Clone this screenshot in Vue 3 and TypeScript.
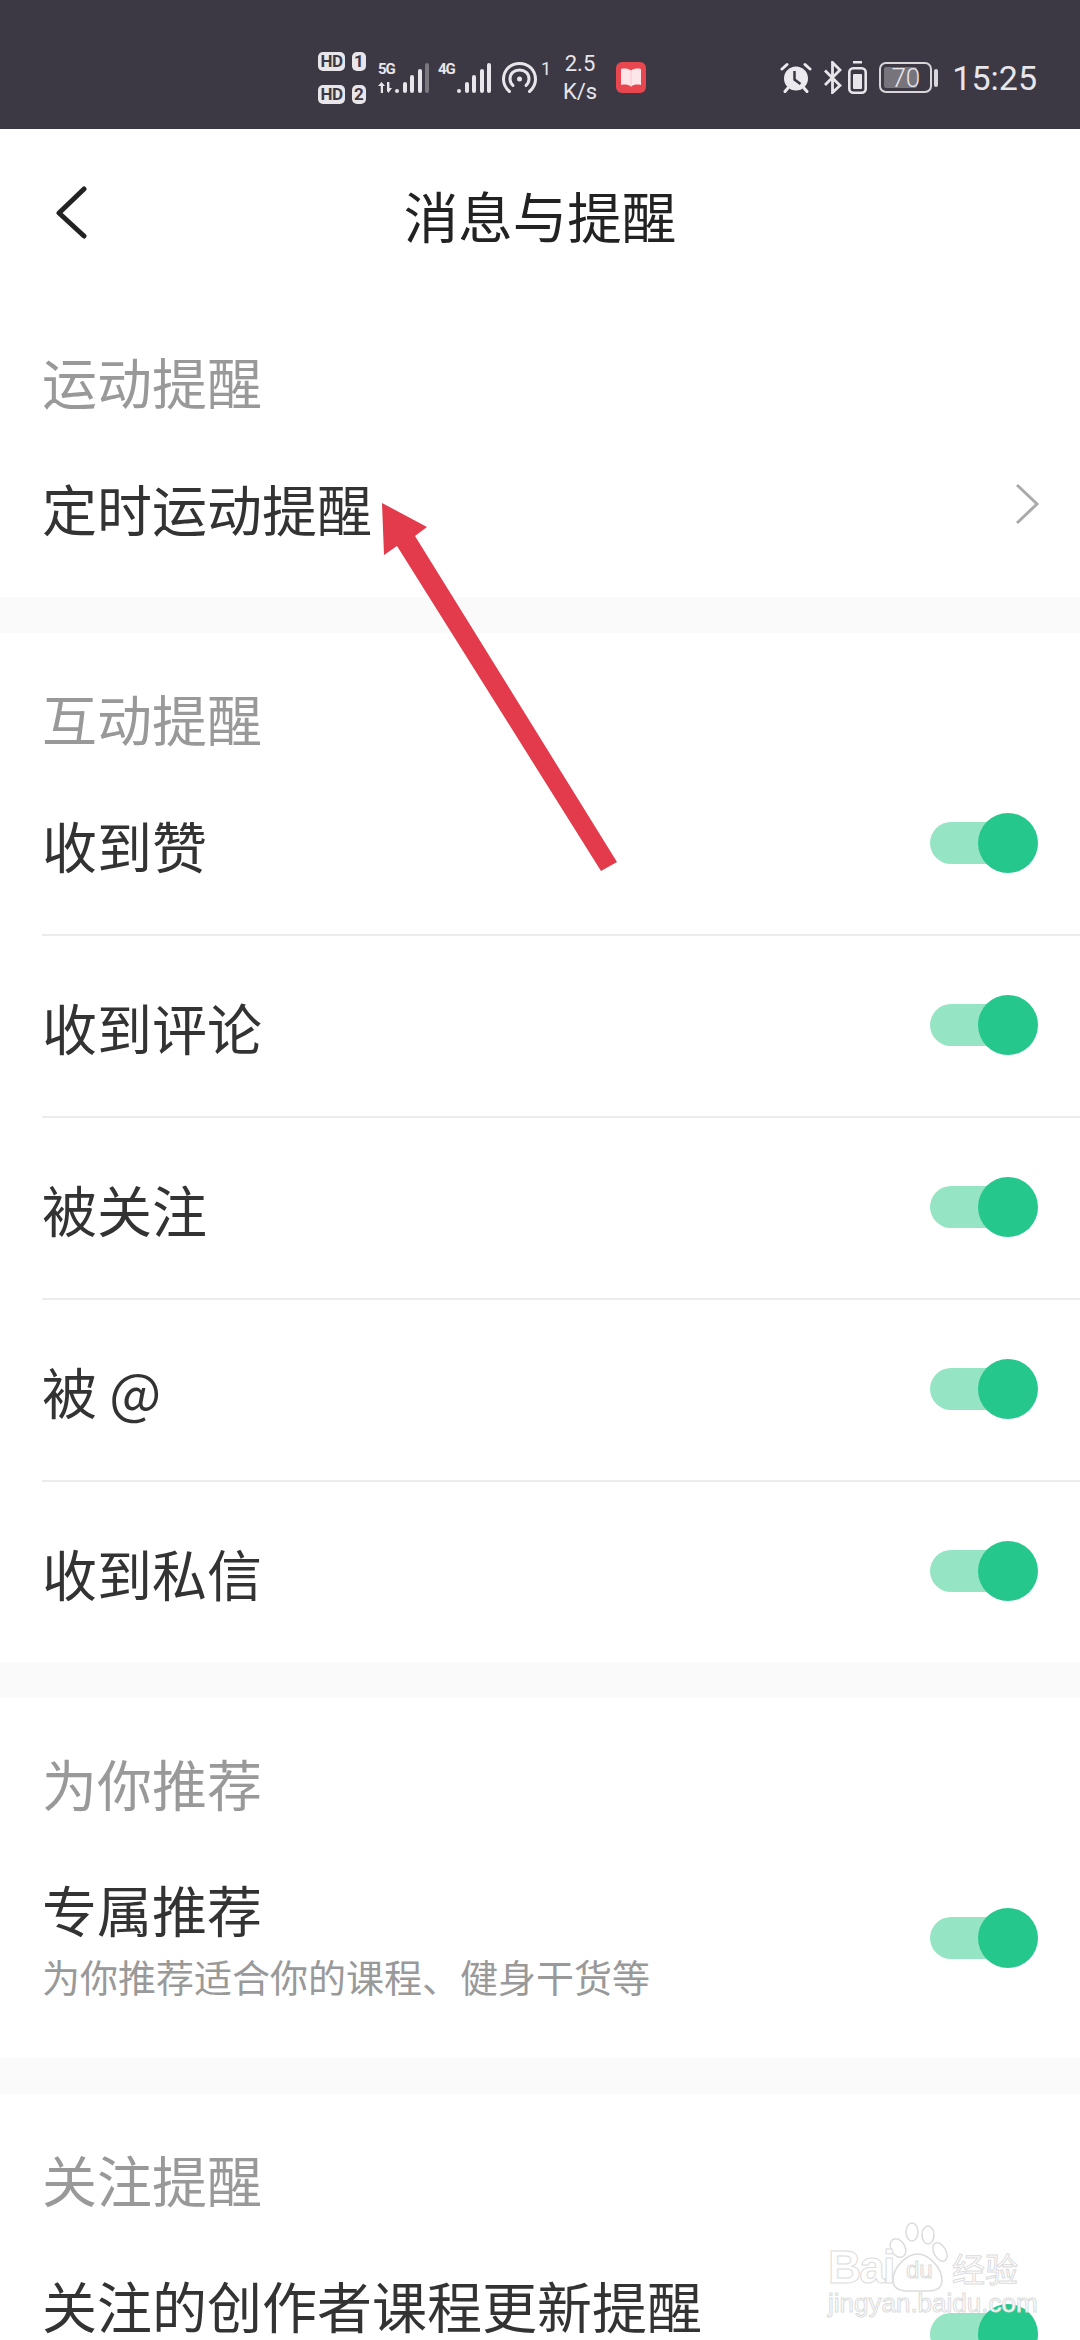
<script setup lang="ts">
interface Row {
  label: string;
  hint?: string;
  arrow?: boolean;
}
interface Section {
  title: string;
  rows: Row[];
}

const sections: Section[] = [
  { title: '运动提醒', rows: [{ label: '定时运动提醒', arrow: true }] },
  {
    title: '互动提醒',
    rows: [
      { label: '收到赞' },
      { label: '收到评论' },
      { label: '被关注' },
      { label: '被 @' },
      { label: '收到私信' },
    ],
  },
  { title: '为你推荐', rows: [{ label: '专属推荐', hint: '为你推荐适合你的课程、健身干货等' }] },
  // the hint of this row is below the fold, only its height shows
  { title: '关注提醒', rows: [{ label: '关注的创作者课程更新提醒', hint: '\u00a0' }] },
];

const barHeights = [4, 11, 18, 24, 30];
</script>

<template>
  <div class="screen">
    <div class="status">
      <div class="sims">
        <div class="sim"><span class="hd">HD</span><span class="num">1</span></div>
        <div class="sim"><span class="hd">HD</span><span class="num">2</span></div>
      </div>
      <div class="signal s5g">
        <div class="net">
          <span>5G</span>
          <svg width="17" height="11" viewBox="0 0 17 11" fill="#e8e6ea">
            <path d="M0 4l3.5-4L7 4H5v7H2.800V4zM9 0h2.400v6H14l-3.600 5L9 9z" />
          </svg>
        </div>
        <div class="bars">
          <i v-for="(h, i) in barHeights" :key="i" :class="{ dim: i === 4 }" :style="{ height: h + 'px' }" />
        </div>
      </div>
      <div class="signal s4g">
        <div class="net"><span>4G</span></div>
        <div class="bars">
          <i v-for="(h, i) in barHeights" :key="i" :style="{ height: h + 'px' }" />
        </div>
      </div>
      <svg class="hotspot" width="35" height="31" viewBox="0 0 35 31" fill="none" stroke="#e8e6ea" stroke-width="3" stroke-linecap="round">
        <path d="M7.500 29.500C3.500 26 1.500 22 1.500 17.500 1.500 8 8.500 1.500 17.500 1.500S33.500 8 33.500 17.500c0 4.500-2 8.500-6 12" />
        <path d="M11 23.500c-2-2-3-4-3-6.500 0-5.500 4-9 9.500-9s9.500 3.500 9.500 9c0 2.500-1 4.500-3 6.500" />
        <circle cx="17.500" cy="17" r="2.500" fill="#e8e6ea" stroke="none" />
      </svg>
      <span class="hot-num">1</span>
      <div class="speed"><span>2.5</span><span>K/s</span></div>
      <svg class="book" width="30" height="31" viewBox="0 0 30 31">
        <rect width="30" height="31" rx="6" fill="#e8474f" />
        <path d="M5 7c4-1 7-.5 10 1.500C18 6.500 21 6 25 7v16c-4-1-7-.5-10 1.500C12 22.500 9 22 5 23z" fill="#fde6ea" />
        <path d="M15 8.500v16" stroke="#f6c5cc" stroke-width="1" />
      </svg>
      <div class="spacer" />
      <svg class="alarm" width="32" height="31" viewBox="0 0 32 31">
        <circle cx="16" cy="16.500" r="12" fill="#eceaee" />
        <path d="M2 7l5-4.500M30 7l-5-4.500" stroke="#eceaee" stroke-width="3" stroke-linecap="round" />
        <path d="M14.500 9v8.500l6 4.500" fill="none" stroke="#3d3944" stroke-width="2.500" />
        <path d="M5 29.500l3-3.500M27 29.500l-3-3.500" stroke="#eceaee" stroke-width="3" stroke-linecap="round" />
      </svg>
      <svg class="bt" width="18" height="33" viewBox="0 0 18 33" fill="none" stroke="#e8e6ea" stroke-width="2.800">
        <path d="M1 9.500l15 15-7.500 7V1.500L16 9 1 24" />
      </svg>
      <svg class="batt-small" width="19" height="33" viewBox="0 0 19 33">
        <rect x="5" y="0" width="9" height="2.500" fill="#e8e6ea" />
        <rect x="1.300" y="7.300" width="16.400" height="24.400" rx="4" fill="none" stroke="#e8e6ea" stroke-width="2.600" />
        <rect x="5" y="13" width="9" height="15" rx="1" fill="#e8e6ea" />
      </svg>
      <div class="battery">
        <div class="batt-body"><div class="batt-fill" /><span>70</span></div>
        <div class="batt-cap" />
      </div>
      <span class="time">15:25</span>
    </div>

    <div class="topbar">
      <svg class="back" width="34" height="54" viewBox="0 0 34 54" fill="none" stroke="#222" stroke-width="5" stroke-linecap="round" stroke-linejoin="round">
        <path d="M29 4L4 28l25 23" />
      </svg>
      <h1 class="title">消息与提醒</h1>
    </div>

    <section v-for="s in sections" :key="s.title" class="section">
      <div class="sec-title">{{ s.title }}</div>
      <div
        v-for="r in s.rows"
        :key="r.label"
        class="row"
        :class="{ 'row-hint': r.hint }"
      >
        <div class="row-text">
          <div class="label">{{ r.label }}</div>
          <div v-if="r.hint" class="hint">{{ r.hint }}</div>
        </div>
        <svg v-if="r.arrow" class="chev" width="26" height="42" viewBox="0 0 26 42" fill="none" stroke="#aaa" stroke-width="3">
          <path d="M3 2l20 19L3 40" />
        </svg>
        <div v-else class="switch"><div class="knob" /></div>
      </div>
    </section>

    <svg class="red-arrow" width="1080" height="900" viewBox="0 0 1080 900">
      <path d="M382 503L427 527 415 536 617 862 601 871 397 546 384 555Z" fill="#e33b4b" />
    </svg>

    <div class="mark">
      <svg class="paw" width="80" height="80" viewBox="0 0 80 80" fill="#fff" stroke="#dcdcdc" stroke-width="1.500">
        <ellipse cx="16" cy="26" rx="7" ry="10" transform="rotate(-30 16 26)" />
        <ellipse cx="30" cy="10" rx="6" ry="9" />
        <ellipse cx="46" cy="13" rx="6" ry="9" />
        <ellipse cx="58" cy="30" rx="6" ry="10" transform="rotate(-30 58 30)" />
        <path d="M36 32c9 0 24 12 24 27 0 8-8 10-15 10H26c-9 0-15-3-15-11 0-13 14-26 25-26z" />
      </svg>
      <span class="mark-bai">Bai</span>
      <span class="mark-du">du</span>
      <span class="mark-jy">经验</span>
      <span class="mark-url">jingyan.baidu.com</span>
    </div>
  </div>
</template>

<style scoped>
.screen {
  position: relative;
  width: 1080px;
  height: 2340px;
  overflow: hidden;
  background: #fafafa;
  font-family: "Noto Sans CJK SC", "Noto Sans", sans-serif;
  color: #333;
}

/* status bar */
.status {
  display: flex;
  align-items: center;
  height: 129px;
  padding: 26px 43px 0 318px;
  box-sizing: border-box;
  background: #3d3944;
  color: #e8e6ea;
  font-family: Roboto, "Liberation Sans", sans-serif;
}
.sims {
  display: flex;
  flex-direction: column;
  gap: 14px;
  width: 48px;
}
.sim {
  display: flex;
  justify-content: space-between;
  height: 19px;
}
.hd,
.num {
  display: flex;
  align-items: center;
  justify-content: center;
  border-radius: 5px;
  background: #e8e6ea;
  color: #3d3944;
  font-size: 17px;
  font-weight: 700;
}
.hd {
  width: 27px;
  letter-spacing: -0.5px;
}
.num {
  width: 14px;
}
.signal {
  display: flex;
  align-items: flex-end;
  height: 30px;
}
.s5g {
  margin-left: 12px;
}
.s4g {
  margin-left: 9px;
}
.net {
  display: flex;
  flex-direction: column;
  justify-content: space-between;
  align-self: stretch;
  width: 17px;
  font-size: 15px;
  font-weight: 700;
  line-height: 13px;
  letter-spacing: -1px;
}
.s4g .net {
  margin-right: 2px;
}
.bars {
  display: flex;
  align-items: flex-end;
  gap: 3.500px;
}
.bars i {
  width: 4px;
  background: #e8e6ea;
  border-radius: 2px;
}
.bars i.dim {
  background: #7b7880;
}
.hotspot {
  margin-left: 11px;
}
.hot-num {
  align-self: flex-start;
  width: 9px;
  margin: 34px 0 0 4px;
  font-size: 18px;
  line-height: 18px;
}
.speed {
  display: flex;
  flex-direction: column;
  align-items: center;
  width: 36px;
  margin-left: 12px;
  font-size: 22px;
  line-height: 28px;
}
.book {
  margin-left: 18px;
}
.spacer {
  flex: 1;
}
.bt {
  margin-left: 12px;
}
.batt-small {
  margin-left: 6px;
}
.battery {
  display: flex;
  align-items: center;
  gap: 2px;
  margin-left: 12px;
}
.batt-body {
  position: relative;
  display: flex;
  align-items: center;
  justify-content: center;
  width: 53px;
  height: 31px;
  box-sizing: border-box;
  border: 2px solid #d8d6da;
  border-radius: 7px;
  font-size: 26px;
  font-weight: 300;
}
.batt-fill {
  position: absolute;
  top: 3px;
  bottom: 3px;
  left: 3px;
  width: 33px;
  border-radius: 2px;
  background: #77747c;
}
.batt-body span {
  position: relative;
}
.batt-cap {
  width: 4px;
  height: 18px;
  border-radius: 2px;
  background: #d8d6da;
}
.time {
  margin-left: 14px;
  font-size: 34px;
}

/* nav */
.topbar {
  position: relative;
  display: flex;
  align-items: center;
  justify-content: center;
  height: 171px;
  margin-bottom: -4px;
}
.topbar,
.section {
  background: #fff;
}
.back {
  position: absolute;
  top: 56px;
  left: 55px;
}
.title {
  position: relative;
  margin: 0;
  font-size: 54.500px;
  font-weight: 400;
  line-height: 60px;
  color: #222;
}

/* sections */
.section {
  position: relative;
  padding-top: 54px;
  margin-bottom: 36px;
}
.sec-title {
  height: 65px;
  padding-left: 42px;
  font-size: 55px;
  line-height: 60px;
  color: #999;
}
.row {
  position: relative;
  display: flex;
  align-items: center;
  justify-content: space-between;
  height: 182px;
  padding: 0 42px;
  box-sizing: border-box;
}
.row + .row::before {
  content: "";
  position: absolute;
  top: 0;
  right: 0;
  left: 42px;
  height: 2px;
  background: #ececec;
}
.row-hint {
  height: 241px;
}
.label {
  padding-top: 1px;
  font-size: 55px;
  line-height: 64px;
}
.hint {
  margin-top: 12px;
  font-size: 38px;
  line-height: 48px;
  color: #999;
}
.chev {
  margin-right: -2px;
  margin-top: -4px;
}
.switch {
  position: relative;
  width: 90px;
  height: 42px;
  margin-right: 18px;
  border-radius: 21px;
  background: #95e5c4;
}
.knob {
  position: absolute;
  top: -9px;
  right: -18px;
  width: 60px;
  height: 60px;
  border-radius: 50%;
  background: #26c78d;
}

/* overlays */
.red-arrow {
  position: absolute;
  top: 0;
  left: 0;
  pointer-events: none;
}
.mark {
  position: absolute;
  top: 2220px;
  left: 820px;
  width: 210px;
  height: 100px;
  font-family: "Liberation Sans", sans-serif;
  color: #fff;
  -webkit-text-stroke: 1px #dcdcdc;
}
.paw {
  position: absolute;
  top: 2px;
  left: 62px;
}
.mark-bai {
  position: absolute;
  top: 22px;
  left: 8px;
  font-size: 46px;
  font-weight: 700;
  line-height: 50px;
  letter-spacing: -2px;
}
.mark-du {
  position: absolute;
  top: 36px;
  left: 86px;
  font-size: 24px;
  line-height: 28px;
}
.mark-jy {
  position: absolute;
  top: 28px;
  left: 132px;
  font-family: "Noto Sans CJK SC", sans-serif;
  font-size: 33px;
  line-height: 40px;
}
.mark-url {
  position: absolute;
  top: 68px;
  left: 8px;
  font-size: 26px;
  line-height: 30px;
}
</style>
